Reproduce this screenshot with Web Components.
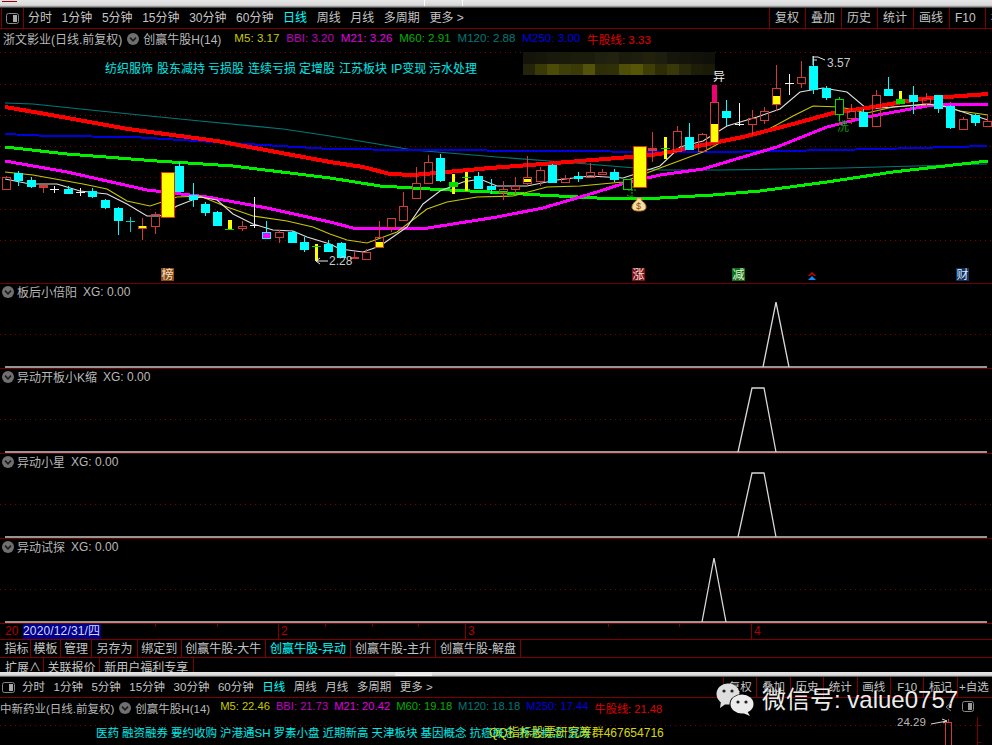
<!DOCTYPE html>
<html>
<head>
<meta charset="utf-8">
<title>K</title>
<style>
  html, body { margin: 0; padding: 0; background: #000; overflow: hidden; }
  body { width: 992px; height: 745px; position: relative; font-family: "Liberation Sans", "Noto Sans CJK SC", sans-serif; font-size: 12px; color: #c0c0c0; }
  .second { --fs: 11.5px; --vf: 11.2px; --vgap: 6px; --vleft: 10px; --tool-align: center; --tool-pad: 0; }
</style>
</head>
<body>
<window-strip notches="424,462"></window-strip>
<period-bar left="28" gap="9.6" btn="36" items="分时,1分钟,5分钟,15分钟,30分钟,60分钟,日线,周线,月线,多周期,更多 &gt;" tools="复权,叠加,历史,统计,画线,F10,标记"></period-bar>
<quote-line stock="浙文影业(日线.前复权)" pad="3" vals="M5: 3.17|#c8c800,BBI: 3.20|#c000c0,M21: 3.26|#e000e0,M60: 2.91|#00b000,M120: 2.88|#007878,M250: 3.00|#0000e0,牛股线: 3.33|#e00000"></quote-line>
<kline-chart></kline-chart>
<sub-panel label="板后小倍阳" value="XG: 0.00" points="763,84 776,19 789,84"></sub-panel>
<sub-panel label="异动开板小K缩" value="XG: 0.00" points="738,84 752,20 764,20 776,84"></sub-panel>
<sub-panel label="异动小星" value="XG: 0.00" points="738,84 752,20 764,20 776,84"></sub-panel>
<sub-panel label="异动试探" value="XG: 0.00" points="702,84 714,20 726,84"></sub-panel>
<date-axis></date-axis>
<tab-row columns="3px 28px 30px 31px 46px 43.5px 84.5px 85px 85px 85px" height="17" lh="19" items="指标,模板,管理,另存为,绑定到,创赢牛股-大牛,创赢牛股-异动,创赢牛股-主升,创赢牛股-解盘" active="创赢牛股-异动"></tab-row>
<tab-row columns="3px 41px 56px 93.5px" height="14" lh="20" items="扩展∧,关联报价,新用户福利专享"></tab-row>
<window-strip class="second" height="5" thumb="395,432"></window-strip>
<period-bar class="second" left="22" gap="8.5" btn="33.4" icon="small" items="分时,1分钟,5分钟,15分钟,30分钟,60分钟,日线,周线,月线,多周期,更多 &gt;" tools="复权,叠加,历史,统计,画线,F10,标记,+自选"></period-bar>
<quote-line class="second" stock="中新药业(日线.前复权)" pad="0" vals="M5: 22.46|#c8c800,BBI: 21.73|#c000c0,M21: 20.42|#e000e0,M60: 19.18|#00b000,M120: 18.18|#007878,M250: 17.44|#0000e0,牛股线: 21.48|#e00000"></quote-line>
<mini-chart></mini-chart>
<wechat-mark></wechat-mark>

<script>
const RED = '#800000';

class WindowStrip extends HTMLElement {
  connectedCallback() {
    this.attachShadow({mode: 'open'});
    const h = this.getAttribute('height') || 8;
    const notches = (this.getAttribute('notches') || '').split(',').filter(Boolean);
    const thumb = this.getAttribute('thumb');
    let marks = notches.map(x => `<i style="left:${x}px;width:1px;background:#fff"></i>`).join('');
    if (thumb) {
      const [a, b] = thumb.split(',');
      marks += `<i style="left:${a}px;width:${b - a}px;background:#ececec"></i>`;
    } else {
      marks += `<b></b>`;
    }
    this.shadowRoot.innerHTML = `
    <style>
      :host { display: block; height: ${h}px; position: relative; background: linear-gradient(#e6e6e6 0, #d8d8d8 65%, #8c8c8c 85%, #202020 100%); }
      i { position: absolute; top: 0; height: 80%; }
      b { position: absolute; left: 2px; top: 1px; width: 15px; height: 1px; background: #a00000; }
    </style>${marks}`;
  }
}
customElements.define('window-strip', WindowStrip);

class PeriodBar extends HTMLElement {
  connectedCallback() {
    this.attachShadow({mode: 'open'});
    const items = this.getAttribute('items').split(',');
    const tools = this.getAttribute('tools').split(',');
    const small = this.getAttribute('icon') === 'small';
    const btn = this.getAttribute('btn');
    this.shadowRoot.innerHTML = `
    <style>
      :host { display: flex; height: 20px; border-bottom: 1px solid ${RED}; color: #c4c4c4; font-size: var(--fs, 12px); line-height: 20px; overflow: hidden; white-space: nowrap; }
      .ico { flex: none; box-sizing: border-box; display: flex; align-items: center; ${small ? 'width: 17px; padding-left: 2px;' : `width: 23px; margin-left: 1px; padding-left: 4px; border-left: 1px solid ${RED}; border-right: 1px solid ${RED};`} }
      .ico svg { display: block; }
      .items { display: flex; gap: ${this.getAttribute('gap')}px; margin-left: ${small ? 5 : 4}px; flex: 1; }
      .on { color: #00ffff; }
      .tools { display: flex; flex: none; width: ${tools.length === 8 ? 269 : 223}px; }
      .tools span { flex: none; width: ${btn}px; box-sizing: border-box; border-left: 1px solid ${RED}; text-align: var(--tool-align, left); padding-left: var(--tool-pad, 5px); }
    </style>
    <div class="ico"><svg width="13" height="11"><rect x=".5" y=".5" width="12" height="10" rx="2" fill="none" stroke="#888"/><rect x="7" y="2" width="4" height="7" fill="#aaa"/></svg></div>
    <div class="items">${items.map(t => `<span class="${t === '日线' ? 'on' : ''}">${t}</span>`).join('')}</div>
    <div class="tools">${tools.map(t => `<span>${t}</span>`).join('')}</div>`;
  }
}
customElements.define('period-bar', PeriodBar);

class QuoteLine extends HTMLElement {
  connectedCallback() {
    this.attachShadow({mode: 'open'});
    const vals = this.getAttribute('vals').split(',').map(v => v.split('|'));
    this.shadowRoot.innerHTML = `
    <style>
      :host { display: flex; align-items: center; height: 19px; padding-left: ${this.getAttribute('pad')}px; color: #b8b8b8; font-size: var(--fs, 12px); white-space: nowrap; overflow: hidden; }
      chevron-dot { margin: 0 4px 0 5px; }
      .vals { display: flex; gap: var(--vgap, 6.8px); margin-left: var(--vleft, 13px); font-size: var(--vf, 11.6px); }
    </style>
    <span>${this.getAttribute('stock')}</span>
    <chevron-dot></chevron-dot>
    <span>创赢牛股H(14)</span>
    <div class="vals">${vals.map(v => `<span style="color:${v[1]}">${v[0]}</span>`).join('')}</div>`;
  }
}
customElements.define('quote-line', QuoteLine);

class ChevronDot extends HTMLElement {
  connectedCallback() {
    this.attachShadow({mode: 'open'});
    this.shadowRoot.innerHTML = `
    <style>:host { display: inline-flex; flex: none; width: 12px; height: 12px; } svg { display: block; }</style>
    <svg width="12" height="12"><circle cx="6" cy="6" r="6" fill="#707070"/><path d="M3 4.6 6 7.8 9 4.6" fill="none" stroke="#1c1c1c" stroke-width="1.6"/></svg>`;
  }
}
customElements.define('chevron-dot', ChevronDot);

// x, wick top, wick bottom, body top, body bottom, kind
const CANDLES = [
  [5.7,177,190,177.5,190,'r'],[17.7,172,187,174,181,'c'],[30.7,178,189,181,187,'c'],[42.7,186,194,186,187.5,'rf'],
  [54.3,187,194,190,190,'w'],[68.3,187,194,190,194,'c'],[80,189,197,193,193,'w'],[92.3,189,199,192,197,'c'],
  [104.7,200,210,201,208,'c'],[117.7,208,236,209,221,'c'],[130,218,233,221.5,221.5,'t'],[142.3,219,241,227,229,'ry'],
  [155.3,213,235,215,227,'r'],[167.3,173,218,173,218,'Y'],[179.3,163,193,167,192,'c'],[192.7,184,208,196,200,'c'],
  [204.7,203,217,205,213,'c'],[217,212,226,213,226,'c'],[229,221,231,229,231,'s'],[242.3,222,232,227,229,'r'],
  [254.3,198,229,225.5,225.5,'w'],[266.3,222,238,233,238.5,'m'],[279.3,231,244,233,238,'r'],[291.7,232,243,233,243,'c'],
  [303.7,238,253,243,250,'c'],[315.7,245,262,247,247,'s2'],[328,241,252,245,252,'c'],[341.3,243,259,244,258,'c'],
  [354,252,260,257.5,258.5,'rf'],[366.3,250,261,253,260,'r'],[378.7,222,248,238,248,'ry'],[390.7,219,233,219,228,'r'],
  [403,193,221,207,221,'r'],[416,168,200,184,199,'r'],[428.3,156,185,163,184,'r'],[440.3,155,183,159,181,'c'],
  [453.3,175,195,183,187,'s3'],[465.7,173,192,178,179,'s2'],[477.7,173,190,177,189,'c'],[490.7,180,195,187,190,'c'],
  [503,182,201,190,193,'r'],[515.3,178,195,187,190,'r'],[527.3,157,187,178,184,'ry'],[540.3,168,187,171,182,'r'],
  [552.3,165,183,166,183,'c'],[564.7,176,184,179,183,'r'],[577.7,173,183,177,179,'c'],[590,164,178,173,178,'r'],
  [602.3,170,176,173,175,'r'],[614,170,183,173,180,'c'],[627.3,180,190,180,190,'g'],[639.3,147,188,147,188,'Y'],
  [651.7,133,163,149,151,'rf'],[664.7,138,160,149,150,'s2'],[677,127,152,132,152,'r'],[689.3,124,150,138,150,'c'],
  [702.3,134,152,135,152,'r'],[714.3,103,143,103,143,'B'],[726.3,101,127,112,118,'c'],[738.7,104,127,125,125,'w'],
  [751.7,111,136,119,125,'r'],[764,108,125,112,121,'r'],[776,66,112,89,105,'ry'],[789,75,96,84,84,'w'],
  [801.3,62,89,78,84,'r'],[813.3,57,95,67,90,'c'],[825.7,87,101,89,98,'c'],[838.7,98,122,100,115,'g'],
  [850.7,105,125,112,119,'r'],[863,110,127,113,127,'c'],[876.3,91,128,96,127,'r'],[888.3,78,96,90,96,'c'],
  [900.3,92,100,100,104,'s3'],[913.3,87,115,96,102,'c'],[926,94,108,99,104,'r'],[937.7,96,114,96,109,'c'],
  [950,106,130,107,128,'c'],[963,118,131,120,130,'r'],[975.3,115,127,116,123,'c'],[987.3,116,128,122,127,'r']
];

function candleSvg([x, wt, wb, bt, bb, k]) {
  const cx = Math.round(x);
  const wick = (c, a = wt, b = wb) => `<rect x="${cx}" y="${a}" width="1" height="${b - a}" fill="${c}"/>`;
  const box = (c, f, a = bt, b = bb, w = 9) => `<rect x="${cx - (w - 1) / 2 + .5}" y="${a + .5}" width="${w - 1}" height="${b - a}" fill="${f}" stroke="${c}"/>`;
  const bar = (c, y, w = 9) => `<rect x="${cx - (w - 1) / 2}" y="${y}" width="${w}" height="1" fill="${c}"/>`;
  const R = '#d23a3a', C = '#00ffff', Y = '#ffff00', G = '#00e000';
  switch (k) {
    case 'r': return wick(R, wt, bt) + wick(R, bb, wb) + box(R, 'none');
    case 'rf': return wick(R) + box(R, R, bt, bb);
    case 'c': return wick(C) + box(C, C);
    case 't': return wick('#00c8c8') + bar('#00c8c8', bt);
    case 'w': return wick('#f0f0f0') + bar('#f0f0f0', bt);
    case 'm': return wick(C) + box(C, '#ff00ff');
    case 'ry': return wick(R, wt, bt) + wick(R, bb, wb) + box(R, 'none') + `<rect x="${cx - 3}" y="${(bt + bb) / 2 + (bb - bt > 6 ? 0 : -1)}" width="7" height="${Math.max(2, (bb - bt) / 2)}" fill="${Y}"/>`;
    case 'Y': return `<rect x="${cx - 6}" y="${bt}" width="13" height="${bb - bt}" fill="${Y}" stroke="#e03000"/>`;
    case 'B': return box(R, 'none') + `<rect x="${cx - 3}" y="${(bt + bb) / 2 + 2}" width="7" height="${(bb - bt) / 2 - 2}" fill="${Y}"/><rect x="${cx - 2}" y="86" width="5" height="17" fill="#f00070"/>`;
    case 'g': return wick(G) + box(G, '#000');
    case 's': return `<rect x="${cx - 1}" y="${wt}" width="4" height="${wb - wt - 1}" fill="${Y}"/>` + bar(G, wb - 1) ;
    case 's2': return `<rect x="${cx - 1}" y="${wt}" width="3" height="${wb - wt}" fill="${Y}"/>` + bar(G, bt);
    case 's3': return `<rect x="${cx - 1}" y="${wt}" width="3" height="${wb - wt}" fill="${Y}"/>` + box(G, G);
  }
  return '';
}

const LINES = [
  ['#007878', 1.2, '5,104 33,105 100,112 200,122 283,130 330,137 413,151 497,158 563,163 623,168 660,171 720,171 843,169 987,165'],
  ['#0000e0', 2, '5,135 50,137 133,138 213,143 330,150 413,151 560,152 660,153 703,153 783,152 880,150 987,147'],
  ['#00f000', 3, '5,148 67,155 157,162 233,167 330,179 380,187 430,190 490,193 540,196 597,199 660,199 713,196 760,192 827,183 893,173 988,162'],
  ['#ff00ff', 3, '5,162 67,173 147,191 207,198 267,209 330,223 353,229 428,229 497,218 543,209 597,193 622,185 660,176 703,170 743,158 777,148 827,128 867,118 927,107 950,105 988,106'],
  ['#c8c800', 1.1, '5,173 33,176 83,185 107,190 127,202 150,207 177,198 200,197 227,208 253,217 287,222 313,228 330,235 347,241 367,244 397,233 427,210 447,203 477,198 513,197 547,188 580,187 623,183 660,169 703,153 727,140 760,135 793,117 813,107 840,108 867,114 893,108 937,105 960,112 988,116'],
  ['#e0e0e0', 1.1, '5,180 30,185 57,185 80,192 107,195 127,205 147,217 160,217 177,207 200,198 217,201 233,215 253,225 273,231 293,232 307,238 330,245 340,250 363,253 380,247 407,228 423,205 440,192 463,183 480,180 497,187 527,187 557,181 590,177 623,179 660,167 680,148 703,142 727,127 757,118 780,110 800,93 823,89 847,93 867,110 893,108 927,105 947,108 988,121'],
  ['#ff0000', 4, '5,108 40,114 128,130 217,142 330,163 363,168 390,175 413,176 447,173 490,169 530,166 580,162 630,158 660,155 693,148 743,138 793,125 833,114 873,108 920,100 988,95']
];

const BLUR_TOP = ['14140a','16160a','1a1a0c','1a1a0a','1c1c0c','1c1c0c','20200e','22220e','1c1c0c','1e1e0e','22220c','1e1e0e','16160c','14140a','12120a','10100a'];
const BLUR_LOW = ['24240a','3a3a08','4c4c06','3e3e08','3a3a06','525208','2e2e06','303008','4e4e08','565606','3e3e06','2c2c06','383808','28280a','1e1e08','1a1a08'];

class KlineChart extends HTMLElement {
  connectedCallback() {
    this.attachShadow({mode: 'open'});
    this.render();
  }
  render() {
    const dots = [53, 85, 116, 147, 178, 210, 241].map(y => `<line x1="0" x2="992" y1="${y + .5}" y2="${y + .5}" stroke="${RED}" stroke-dasharray="1 4"/>`).join('');
    const lines = LINES.map(([c, w, p]) => `<polyline points="${p}" fill="none" stroke="${c}" stroke-width="${w}" ${w > 1.5 ? 'shape-rendering="crispEdges"' : ''}/>`).join('');
    const blur = BLUR_TOP.map((c, i) => `<rect x="${523 + i * 12}" y="53" width="12" height="12" fill="#${c}"/>`).join('')
      + BLUR_LOW.map((c, i) => `<rect x="${523 + i * 12}" y="65" width="12" height="11" fill="#${c}"/>`).join('');
    this.shadowRoot.innerHTML = `
    <style>
      :host { display: block; height: 235px; overflow: hidden; }
      svg { display: block; }
      text { font-family: "Liberation Sans", "Noto Sans CJK SC", sans-serif; font-size: 12px; }
      .tag { fill: #00e8e8; }
    </style>
    <svg width="992" height="235" viewBox="0 49 992 235">
      ${dots}${blur}
      <text class="tag" x="105" y="74">纺织服饰</text><text class="tag" x="157" y="74">股东减持</text><text class="tag" x="208" y="74">亏损股</text><text class="tag" x="248" y="74">连续亏损</text><text class="tag" x="299" y="74">定增股</text><text class="tag" x="339" y="74">江苏板块</text><text class="tag" x="391" y="74">IP变现</text><text class="tag" x="429" y="74">污水处理</text>
      ${lines}
      <g shape-rendering="crispEdges">${CANDLES.map(candleSvg).join('')}</g>
      <text x="713" y="82" fill="#f0f0f0">异</text>
      <path d="M813 66V57M813 58H818L825 61M813 61H817" fill="none" stroke="#e0e0e0"/>
      <text x="827" y="68" fill="#c8c8c8">3.57</text>
      <path d="M328 262H316M320 259 316 262 320 265" fill="none" stroke="#e8e8e8"/>
      <text x="329" y="266" fill="#c8c8c8">2.28</text>
      <text x="837" y="132" fill="#00a000">洗</text>
      <path d="M628 191H637M632 187V198M627 196 631 198" fill="none" stroke="#00c000" stroke-dasharray="2 1"/>
      <g><path d="M636 199H642L641 201C644 203 646 206 646 208 646 211 643 212 639 212 635 212 632 211 632 208 632 206 634 203 637 201Z" fill="#f0e0a8" stroke="#c08818"/><text x="636" y="210" style="font-size:9px" fill="#a04010">$</text></g>
      <rect x="161" y="269" width="13" height="13" fill="#8a4a10"/><text x="161.5" y="280" fill="#f0e0d0">榜</text>
      <rect x="632" y="269" width="13" height="13" fill="#801010"/><text x="632.5" y="280" fill="#f4e0e0">涨</text>
      <rect x="732" y="269" width="13" height="13" fill="#107010"/><text x="732.5" y="280" fill="#e0f4e0">减</text>
      <path d="M812 273 816 277H814L812 275 810 277H808Z" fill="#e00000"/><path d="M812 277 816 281H808Z" fill="#0090ff"/>
      <rect x="956" y="269" width="13" height="13" fill="#103060"/><text x="956.5" y="280" fill="#d8e8f8">财</text>
    </svg>`;
  }
}
customElements.define('kline-chart', KlineChart);

class SubPanel extends HTMLElement {
  connectedCallback() {
    this.attachShadow({mode: 'open'});
    this.shadowRoot.innerHTML = `
    <style>
      :host { display: block; height: 84px; border-top: 1px solid #700000; overflow: hidden; }
      header { display: flex; align-items: center; height: 15px; padding: 0 0 3px 2px; color: #b8b8b8; font-size: 12px; white-space: nowrap; }
      chevron-dot { margin-right: 3px; }
      .v { margin-left: 6px; }
      svg { display: block; }
    </style>
    <header><chevron-dot></chevron-dot><span>${this.getAttribute('label')}</span><span class="v">${this.getAttribute('value')}</span></header>
    <svg width="992" height="66" viewBox="0 19 992 66">
      <line x1="0" x2="992" y1="51.5" y2="51.5" stroke="${RED}" stroke-dasharray="1 4"/>
      <line x1="5" x2="987" y1="84" y2="84" stroke="#c8c8c8" stroke-width="1.6"/>
      <polyline points="${this.getAttribute('points')}" fill="none" stroke="#d8d8d8" stroke-width="1.3"/>
    </svg>`;
  }
}
customElements.define('sub-panel', SubPanel);

class DateAxis extends HTMLElement {
  connectedCallback() {
    this.attachShadow({mode: 'open'});
    const ticks = [155, 217, 325, 372, 418, 608, 679].map(x => `<rect x="${x}" y="0" width="1" height="3" fill="${RED}"/>`).join('');
    this.shadowRoot.innerHTML = `
    <style>
      :host { display: grid; grid-template-columns: 5px 18px 78px 177px 187px 286px 1fr; height: 15px; border-top: 1px solid ${RED}; color: #b00000; font-size: 12px; line-height: 15px; position: relative; }
      .d { background: #000088; color: #d8d8ff; white-space: nowrap; letter-spacing: .15px; }
      .t { border-left: 1px solid ${RED}; padding-left: 2px; }
      .y { overflow: hidden; }
      svg { position: absolute; left: 0; top: 0; }
    </style>
    <div></div><div class="y">20</div><div class="d">2020/12/31/四</div><div></div><div class="t">2</div><div class="t">3</div><div class="t">4</div>
    <svg width="992" height="3">${ticks}</svg>`;
  }
}
customElements.define('date-axis', DateAxis);

class TabRow extends HTMLElement {
  connectedCallback() {
    this.attachShadow({mode: 'open'});
    const on = this.getAttribute('active');
    const h = +this.getAttribute('height');
    const lh = this.getAttribute('lh');
    this.shadowRoot.innerHTML = `
    <style>
      :host { display: grid; grid-template-columns: ${this.getAttribute('columns')}; height: ${h}px; border-top: 1px solid ${RED}; color: #c4c4c4; font-size: 12px; line-height: ${lh}px; overflow: hidden; white-space: nowrap; }
      span { border-right: 1px solid ${RED}; text-align: center; height: ${lh}px; }
      .on { color: #00ffff; }
    </style>
    <div></div>${this.getAttribute('items').split(',').map(t => `<span class="${t === on ? 'on' : ''}">${t}</span>`).join('')}`;
  }
}
customElements.define('tab-row', TabRow);

class MiniChart extends HTMLElement {
  connectedCallback() {
    this.attachShadow({mode: 'open'});
    const cyan = ['医药','融资融券','要约收购','沪港通SH','罗素小盘','近期新高','天津板块','基因概念','抗癌概念','养老概念','混改'];
    this.shadowRoot.innerHTML = `
    <style>
      :host { display: block; height: 29px; position: relative; overflow: hidden; font-size: 11.5px; white-space: nowrap; }
      svg { position: absolute; inset: 0; }
      .tags { display: flex; gap: 3px; padding: 9px 0 0 96px; color: #00e8e8; position: relative; line-height: 14px; }
      .qq { position: absolute; left: 489px; top: 9px; color: #d8d800; font-size: 12px; line-height: 14px; }
      .price { position: absolute; left: 897px; top: -2px; color: #b8b8b8; font-size: 11.5px; line-height: 14px; }
    </style>
    <svg width="992" height="29" viewBox="0 716 992 29">
      <line x1="0" x2="977" y1="724.5" y2="724.5" stroke="${RED}" stroke-dasharray="1 4"/>
      <line x1="977.5" x2="977.5" y1="716" y2="745" stroke="${RED}"/>
      <line x1="977" x2="981" y1="724.5" y2="724.5" stroke="${RED}"/>
      <line x1="977" x2="981" y1="741.5" y2="741.5" stroke="${RED}"/>
      <path d="M931 723 947 720M942 718 947 720 943 722" fill="none" stroke="#d8d8d8"/>
      <rect x="945.5" y="721.5" width="6" height="30" fill="none" stroke="#d23a3a"/>
      <line x1="948.5" x2="948.5" y1="718" y2="721" stroke="#d23a3a"/>
    </svg>
    <div class="tags">${cyan.map(t => `<span>${t}</span>`).join('')}</div>
    <div class="qq">QQ指标股票研究筹群467654716</div>
    <div class="price">24.29</div>`;
  }
}
customElements.define('mini-chart', MiniChart);

class WechatMark extends HTMLElement {
  connectedCallback() {
    this.attachShadow({mode: 'open'});
    this.shadowRoot.innerHTML = `
    <style>
      :host { position: absolute; left: 715px; top: 682px; display: flex; align-items: center; gap: 7px; color: #ececec; font-size: 24px; line-height: 36px; white-space: nowrap; }
      svg { display: block; }
      .box { position: absolute; left: 230px; top: 19px; }
    </style>
    <svg width="40" height="36">
      <ellipse cx="13" cy="12" rx="11.5" ry="10.5" fill="#dedede"/><path d="M6 19 5 26 12 21Z" fill="#dedede"/>
      <circle cx="9" cy="9" r="1.6" fill="#222"/><circle cx="17" cy="9" r="1.6" fill="#222"/>
      <ellipse cx="27" cy="22" rx="12.5" ry="10" fill="#000"/>
      <ellipse cx="27" cy="22" rx="11.5" ry="9.5" fill="#ececec"/><path d="M32 29 35 34 28 31Z" fill="#ececec"/>
      <circle cx="23" cy="20" r="1.6" fill="#222"/><circle cx="31" cy="20" r="1.6" fill="#222"/>
    </svg>
    <span>微信号: value0757</span>
    <svg class="box" width="30" height="12"><path d="M6 2 1 6 6 10" fill="none" stroke="#888"/><rect x="17.5" y=".5" width="11" height="10" rx="2" fill="none" stroke="#888"/><rect x="23" y="2" width="4" height="7" fill="#999"/></svg>`;
  }
}
customElements.define('wechat-mark', WechatMark);
</script>
</body>
</html>
